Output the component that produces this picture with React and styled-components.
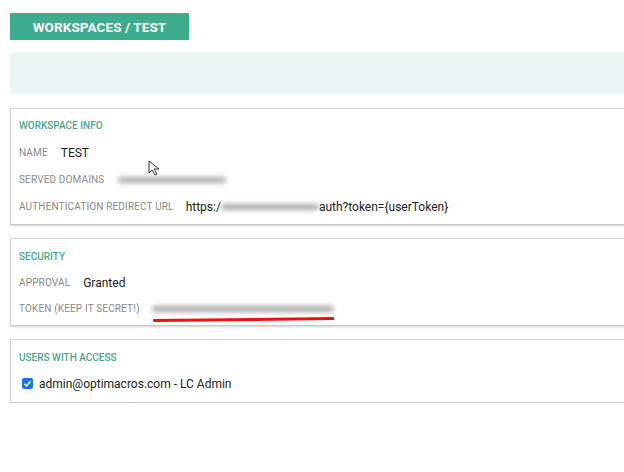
import React from 'react';
import styled, { createGlobalStyle } from 'styled-components';

const GlobalStyle = createGlobalStyle`
  body {
    margin: 0;
    background: #ffffff;
    font-family: Roboto, "Liberation Sans", Arial, sans-serif;
    overflow: hidden;
  }
`;

const Page = styled.div`
  width: 640px;
  padding: 13px 0 0 10px;
  display: flex;
  flex-direction: column;
  gap: 13px;
`;

const Crumb = styled.div`
  width: 179px;
  height: 27px;
  background: #3dab8d;
  color: #ffffff;
  font-size: 13.5px;
  font-weight: 700;
  display: flex;
  align-items: center;
  justify-content: center;
  letter-spacing: 0.1px;
`;

const InfoBar = styled.div`
  height: 41px;
  background: #eaf6f3;
  margin-bottom: 1px;
`;

const Cards = styled.div`
  display: flex;
  flex-direction: column;
  gap: 13px;
`;

const Card = styled.section`
  position: relative;
  background: #fff;
  border: 1px solid #d6d6d6;
  border-bottom-color: #c8c8c8;
  box-shadow: 0 1px 2px rgba(0, 0, 0, 0.18);
  padding: ${p => p.$pad || '10px 0 11px 8px'};
  display: flex;
  flex-direction: column;
  gap: ${p => p.$gap || '14px'};
`;

const CardTitle = styled.div`
  color: #4aa68d;
  font-size: 10px;
  font-weight: 500;
  height: 13px;
  line-height: 13px;
`;

const Row = styled.div`
  display: flex;
  align-items: center;
  height: 13px;
  gap: ${p => p.$gap || '13px'};
  padding-left: ${p => p.$indent || 0}px;
`;

const Label = styled.span`
  color: #8a8a8a;
  font-size: 10px;
  letter-spacing: 0.15px;
`;

const Value = styled.span`
  color: #222;
  font-size: 12px;
`;

const Url = styled.span`
  color: #222;
  font-size: 12px;
  display: flex;
  align-items: center;
`;

const Blur = styled.span`
  display: inline-block;
  width: ${p => p.$w}px;
  height: 6px;
  border-radius: 3px;
  background: #9c9c9c;
  filter: blur(2.5px);
  opacity: 0.85;
`;

const Secret = styled.span`
  position: relative;
  display: inline-flex;
  align-items: center;
`;

const RedLine = styled.span`
  position: absolute;
  left: 1px;
  top: 13px;
  width: 181px;
  height: 2.5px;
  border-radius: 1px;
  background: #f01010;
  transform: rotate(-0.6deg);
  transform-origin: left center;
`;

const Check = styled.span`
  width: 11px;
  height: 11px;
  border-radius: 2px;
  background: #1a73e8;
  display: inline-flex;
  align-items: center;
  justify-content: center;
`;

const Cursor = styled.svg`
  position: absolute;
  left: 137px;
  top: 51px;
`;

export default function App() {
  return (
    <>
      <GlobalStyle />
      <Page>
        <Crumb>WORKSPACES / TEST</Crumb>
        <InfoBar />
        <Cards>
          <Card>
            <CardTitle>WORKSPACE INFO</CardTitle>
            <Row>
              <Label>NAME</Label>
              <Value>TEST</Value>
            </Row>
            <Row $gap="14px">
              <Label>SERVED DOMAINS</Label>
              <Blur $w={108} />
            </Row>
            <Row $gap="12px">
              <Label>AUTHENTICATION REDIRECT URL</Label>
              <Url>
                https:/<Blur $w={98} />auth?token=&#123;userToken&#125;
              </Url>
            </Row>
            <Cursor width="14" height="16" viewBox="0 0 14 16">
              <path d="M1 1 L1 13 L4 10 L7 15 L9 14 L6 9 L11 9 Z" fill="#fff" stroke="#333" strokeWidth="1" />
            </Cursor>
          </Card>
          <Card $gap="13px" $pad="11px 0 10px 8px">
            <CardTitle>SECURITY</CardTitle>
            <Row>
              <Label>APPROVAL</Label>
              <Value>Granted</Value>
            </Row>
            <Row $gap="12px">
              <Label>TOKEN (KEEP IT SECRET!)</Label>
              <Secret>
                <Blur $w={182} />
                <RedLine />
              </Secret>
            </Row>
          </Card>
          <Card $gap="13px" $pad="11px 0 12px 8px">
            <CardTitle>USERS WITH ACCESS</CardTitle>
            <Row $gap="6px" $indent={3}>
              <Check>
                <svg width="9" height="9" viewBox="0 0 9 9">
                  <path d="M1.5 4.8 L3.6 6.8 L7.6 2.2" fill="none" stroke="#fff" strokeWidth="1.6" />
                </svg>
              </Check>
              <Value>admin@optimacros.com - LC Admin</Value>
            </Row>
          </Card>
        </Cards>
      </Page>
    </>
  );
}
